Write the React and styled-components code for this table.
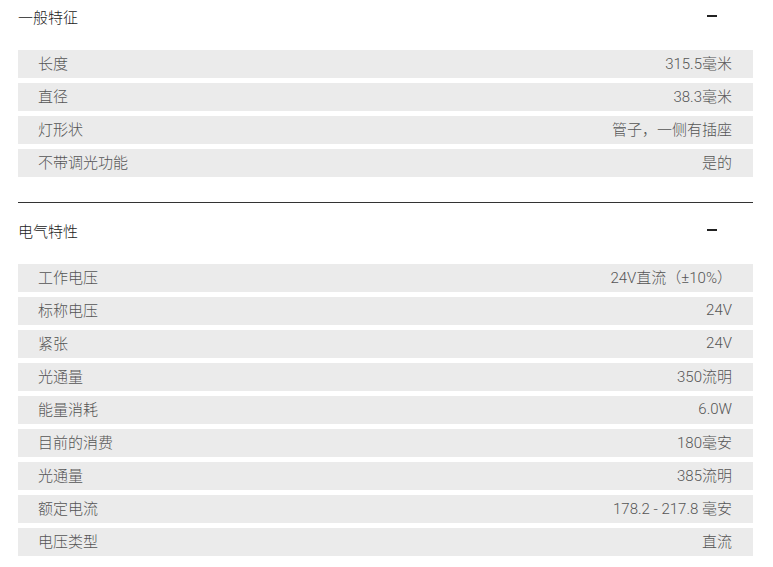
import React from 'react';
import styled, { createGlobalStyle } from 'styled-components';

const GlobalStyle = createGlobalStyle`
  body {
    margin: 0;
    background: #fff;
    font-family: Roboto, "Noto Sans CJK SC", sans-serif;
  }
`;

const Page = styled.div`
  width: 735px;
  padding: 0 20px 0 18px;
`;

const Section = styled.section`
  padding-bottom: ${(p) => (p.last ? '0' : '25px')};
  border-bottom: ${(p) => (p.last ? 'none' : '1px solid #333')};
  margin-bottom: ${(p) => (p.last ? '0' : '11px')};
`;

const Header = styled.div`
  display: flex;
  align-items: center;
  justify-content: space-between;
  box-sizing: border-box;
  height: 34px;
  padding-bottom: 2px;
  margin-bottom: 16px;
  font-size: 15px;
  font-weight: 300;
  color: #222;
`;

const Minus = styled.span`
  display: block;
  width: 10px;
  height: 2px;
  background: #222;
  margin-right: 36px;
`;

const Rows = styled.div`
  display: flex;
  flex-direction: column;
  gap: 5px;
`;

const Row = styled.div`
  display: flex;
  align-items: center;
  justify-content: space-between;
  box-sizing: border-box;
  height: 28px;
  padding: 0 21px 3px 20px;
  background: #ebebeb;
  font-size: 15px;
  font-weight: 300;
  color: #555;
`;

const general = [
  ['长度', '315.5毫米'],
  ['直径', '38.3毫米'],
  ['灯形状', '管子，一侧有插座'],
  ['不带调光功能', '是的'],
];

const electrical = [
  ['工作电压', '24V直流（±10%）'],
  ['标称电压', '24V'],
  ['紧张', '24V'],
  ['光通量', '350流明'],
  ['能量消耗', '6.0W'],
  ['目前的消费', '180毫安'],
  ['光通量', '385流明'],
  ['额定电流', '178.2 - 217.8 毫安'],
  ['电压类型', '直流'],
];

const SpecSection = ({ title, items, last }) => (
  <Section last={last}>
    <Header>
      <span>{title}</span>
      <Minus />
    </Header>
    <Rows>
      {items.map(([label, value], i) => (
        <Row key={i}>
          <span>{label}</span>
          <span>{value}</span>
        </Row>
      ))}
    </Rows>
  </Section>
);

export default function App() {
  return (
    <>
      <GlobalStyle />
      <Page>
        <SpecSection title="一般特征" items={general} />
        <SpecSection title="电气特性" items={electrical} last />
      </Page>
    </>
  );
}
